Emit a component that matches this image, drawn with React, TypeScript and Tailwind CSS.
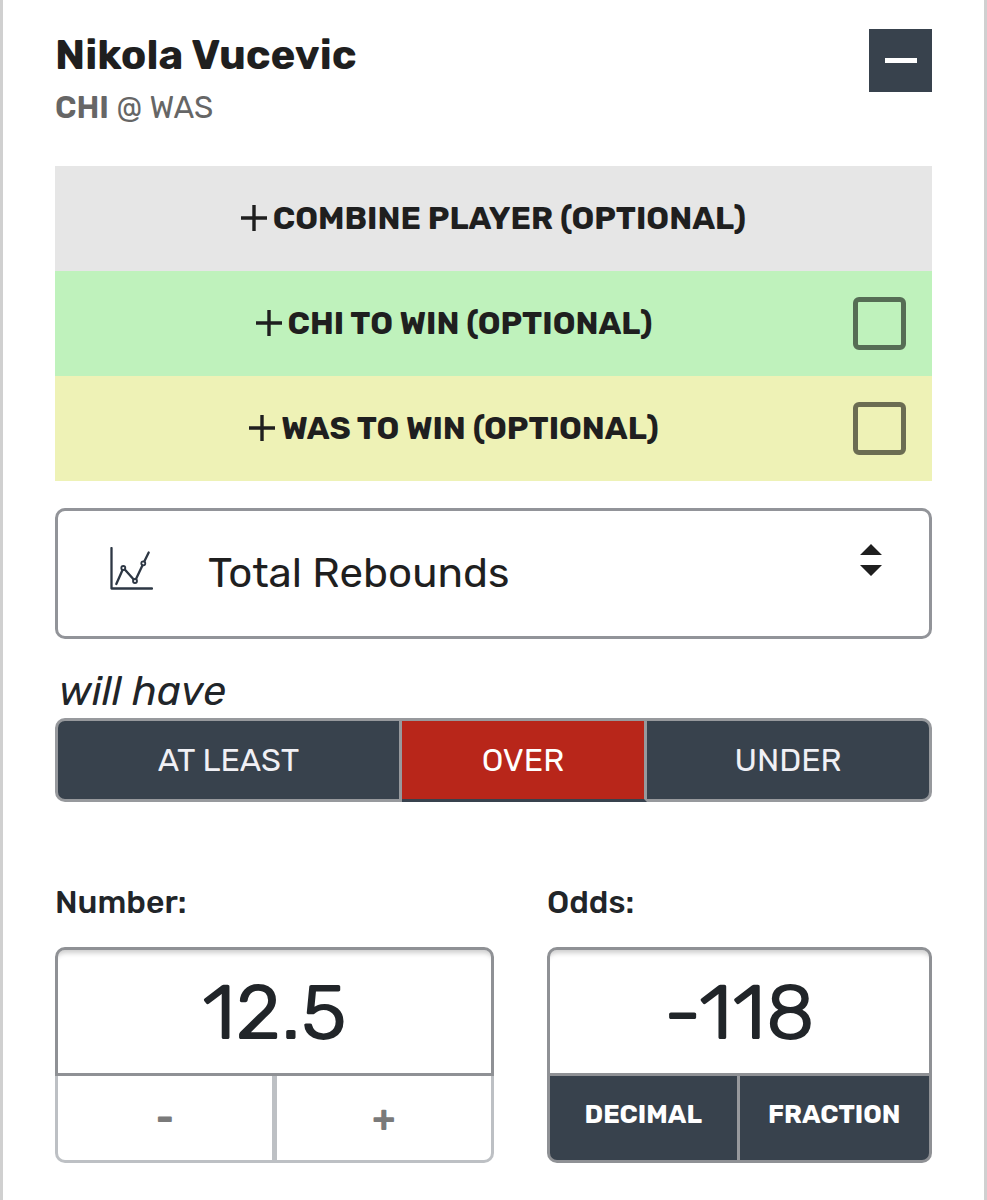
import { useState } from "react";
import type { ReactNode } from "react";

const directions = ["At least", "Over", "Under"];

function PlusIcon() {
  return (
    <svg viewBox="0 0 26 26" className="size-[26px] shrink-0" fill="none" stroke="currentColor" strokeWidth="3.4" aria-hidden="true">
      <path d="M13 0v26M0 13h26" />
    </svg>
  );
}

function ChartIcon() {
  return (
    <svg viewBox="0 0 44 44" className="size-11" fill="none" stroke="#2d3744" strokeWidth="2.3" strokeLinecap="round" aria-hidden="true">
      <path d="M2.500 1v40.500h40.500" strokeLinejoin="round" />
      <path d="M7.300 37l6-13.500M15.800 22.500l8.700 9.800M27 32l6.400-13.500M35.300 14.500l4.400-9" />
      <circle cx="14.300" cy="21" r="2" strokeWidth="1.8" />
      <circle cx="26" cy="34" r="2" strokeWidth="1.8" />
      <circle cx="34.300" cy="16.300" r="2" strokeWidth="1.8" />
    </svg>
  );
}

function WinOption({ label, tone }: { label: string; tone: string }) {
  return (
    <label className={`flex h-[105px] cursor-pointer items-center pr-[26px] ${tone}`}>
      <span className="flex flex-1 items-center justify-center gap-[6px] pb-[2px]">
        <PlusIcon />
        {label}
      </span>
      <input
        type="checkbox"
        className="size-[53px] appearance-none rounded-[6px] border-[5px] border-black/55 checked:bg-black/55"
      />
    </label>
  );
}

function Field({ id, label, value, onChange, children }: {
  id: string;
  label: string;
  value: string;
  onChange: (value: string) => void;
  children: ReactNode;
}) {
  return (
    <div className="min-w-0">
      <label htmlFor={id} className="block text-[32px] leading-10 font-medium text-[#212529]">
        {label}
      </label>
      <input
        id={id}
        type="text"
        value={value}
        onChange={(e) => onChange(e.target.value)}
        className="mt-[25px] block h-[129px] w-full rounded-t-[10px] border-[3px] border-[#8f9195] bg-white pt-[2px] text-center text-[78px] text-[#212529] shadow-[inset_0_8px_5px_-5px_rgba(0,0,0,0.2)]"
      />
      {children}
    </div>
  );
}

export default function App() {
  const [direction, setDirection] = useState("Over");
  const [number, setNumber] = useState("12.5");
  const [odds, setOdds] = useState("-118");
  const step = (delta: number) => setNumber(String(Number(number) + delta));

  return (
    <main className="min-h-screen border-x-[3px] border-[#d0d0d0] bg-white px-[52px] pt-[29px] pb-9 font-[Rubik,Roboto,sans-serif] text-[#1f1f1f]">
      <header className="flex items-start justify-between">
        <div>
          <h1 className="text-[42px] leading-[52px] font-bold">Nikola Vucevic</h1>
          <p className="mt-[7px] text-[31px] leading-10 text-[#666]">
            <b className="font-semibold">CHI</b> @ WAS
          </p>
        </div>
        <button type="button" aria-label="Collapse" className="flex size-[63px] items-center justify-center bg-[#38424d]">
          <span className="h-[5px] w-8 bg-white" />
        </button>
      </header>

      <div className="mt-[38px] text-[32px] font-bold">
        <button type="button" className="flex h-[105px] w-full items-center justify-center gap-[6px] bg-[#e6e6e6] pb-[2px]">
          <PlusIcon />
          COMBINE PLAYER (OPTIONAL)
        </button>
        <WinOption label="CHI TO WIN (OPTIONAL)" tone="bg-[#bff2bc]" />
        <WinOption label="WAS TO WIN (OPTIONAL)" tone="bg-[#eef2b6]" />
      </div>

      <div className="relative mt-[27px]">
        <select
          aria-label="Statistic"
          className="block h-[131px] w-full appearance-none rounded-[10px] border-[3px] border-[#929499] bg-white pl-[150px] text-[42px]"
        >
          <option>Total Rebounds</option>
          <option>Total Points</option>
          <option>Total Assists</option>
        </select>
        <span className="pointer-events-none absolute top-[39px] left-[54px]">
          <ChartIcon />
        </span>
        <svg viewBox="0 0 22 32" className="pointer-events-none absolute top-9 right-[50px] h-8 w-[22px]" fill="#1f1f1f" aria-hidden="true">
          <path d="M0 11L11 0l11 11zM0 21h22L11 32z" />
        </svg>
      </div>

      <p className="mt-[27px] mb-[2px] pl-1 text-[41px] leading-[50px] text-[#212529] italic">will have</p>
      <div className="grid h-[84px] grid-cols-[347fr_245fr_285fr] text-[32px] text-[#f0f0f5]">
        {directions.map((name) => (
          <button
            key={name}
            type="button"
            aria-pressed={direction === name}
            onClick={() => setDirection(name)}
            className="border-y-[3px] border-r-[3px] border-[#97999d] bg-[#38424d] uppercase first:rounded-l-[10px] first:border-l-[3px] last:rounded-r-[10px] aria-pressed:border-b-[#38424d] aria-pressed:bg-[#b8261a] aria-pressed:text-white"
          >
            {name}
          </button>
        ))}
      </div>

      <div className="mt-20 grid grid-cols-[439fr_385fr] gap-[53px]">
        <Field id="number" label="Number:" value={number} onChange={setNumber}>
          <div className="grid h-[87px] grid-cols-2 overflow-hidden rounded-b-[10px] border-[3px] border-t-0 border-[#bdc0c4] text-[38px] font-bold text-[#7a7a7a]">
            <button type="button" aria-label="Decrease number" onClick={() => step(-0.5)} className="border-r-[3px] border-[#bdc0c4]">
              -
            </button>
            <button type="button" aria-label="Increase number" onClick={() => step(0.5)} className="border-l-[2px] border-[#bdc0c4]">
              +
            </button>
          </div>
        </Field>
        <Field id="odds" label="Odds:" value={odds} onChange={setOdds}>
          <div className="grid h-[87px] grid-cols-2 overflow-hidden rounded-b-[10px] border-[3px] border-t-0 border-[#8f9195] bg-[#38424d] text-[26px] font-bold text-white">
            <button type="button" className="border-r-[3px] border-[#97999d] pb-2">DECIMAL</button>
            <button type="button" className="pb-2">FRACTION</button>
          </div>
        </Field>
      </div>
    </main>
  );
}
